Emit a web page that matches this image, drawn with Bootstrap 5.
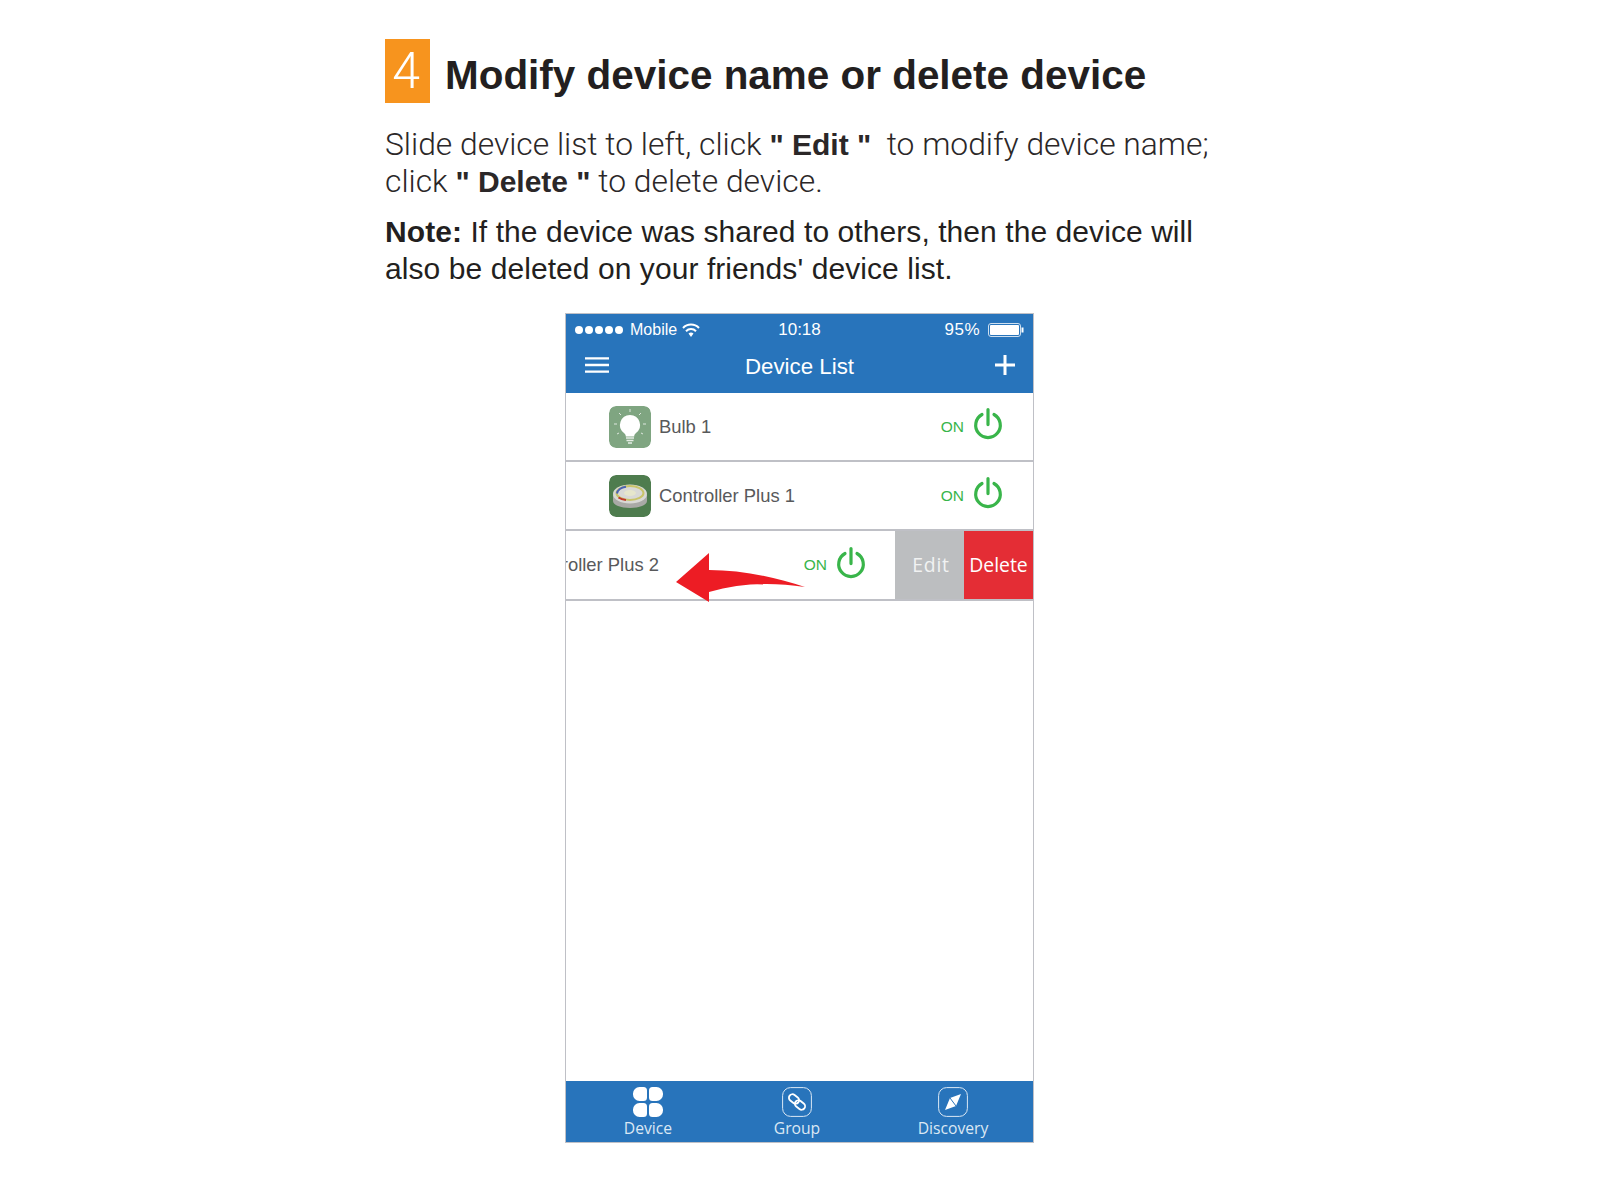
<!DOCTYPE html>
<html lang="en"><head><meta charset="utf-8"><title>Modify device</title>
<link href="https://cdn.jsdelivr.net/npm/bootstrap@5.3.0/dist/css/bootstrap.min.css" rel="stylesheet">
<style>
body{background:#fff;color:#231f20;font-family:"Liberation Sans",Arial,sans-serif;}
.sheet{width:850px;margin-left:385px;padding-top:39px;}
.stepbox{width:45px;height:64px;background:#f7941e;color:#fff;font-family:Roboto,sans-serif;font-size:50px;font-weight:300;line-height:64px;padding-right:3px;text-align:center;flex:none;}
.steptitle{font-size:40.45px;font-weight:700;height:64px;line-height:72px;margin:0 0 0 15px;white-space:nowrap;}
.para{font-size:30px;line-height:37px;margin:23px 0 0;white-space:nowrap;}
.lightp{font-family:Roboto,"Liberation Sans",sans-serif;font-weight:300;font-size:31.8px;color:#2b2728;}
.lightp b{font-family:"Liberation Sans",sans-serif;font-weight:700;font-size:30px;}
.para.notep{margin-top:13px;letter-spacing:.07px;}
.para b{font-weight:700;}
.phone{width:469px;height:830px;margin:26px 0 0 180px;border:1px solid #bfc0c6;display:flex;flex-direction:column;position:relative;overflow:hidden;background:#fff;}
.appbar{background:#2874bb;color:#fff;height:79px;flex:none;}
.statusrow{height:32px;padding:0 9px;font-size:17px;}
.pct{letter-spacing:.5px;}
.dots{display:flex;gap:2px;width:50px;}
.dots i{width:8px;height:8px;border-radius:50%;background:#fff;display:block;}
.mobile{margin-left:5px;font-size:16px;}
.clock{position:absolute;left:0;width:100%;text-align:center;}
.navrow{height:47px;padding:0 18px 9px 19px;position:relative;}
.navtitle{position:absolute;left:0;width:100%;text-align:center;font-size:22.3px;top:0;line-height:41px;}
.devrow{height:69px;border-bottom:2px solid #bfc0c6;flex:none;overflow:hidden;background:#fff;}
.devrow.slidrow{height:70px;}
.devinner{height:67px;padding-left:43px;padding-right:30px;width:467px;flex:none;}
.devinner.slid{margin-left:-136px;width:465px;height:68px;padding-right:29px;}
.appicon{width:42px;height:42px;border-radius:7px;flex:none;display:block;}
.devname{font-size:18.4px;color:#58595b;margin-left:8px;}
.onlbl{font-size:15.5px;color:#39b54a;margin-left:auto;margin-right:9px;}
.pwr{margin-top:-5px;flex:none;}
.swipebtn{width:69px;height:68px;flex:none;color:#fff;font-family:"Open Sans",sans-serif;font-size:19.4px;line-height:68px;text-align:center;}
.swipeedit{background:#bcbec0;color:#f1f2f2;padding-left:3px;letter-spacing:.8px;}
.swipedel{background:#e42d35;}
.filler{flex:1 1 auto;}
.tabbar{background:#2874bb;height:61px;flex:none;color:#dbe8f4;font-family:"Open Sans",sans-serif;font-size:15.7px;}
.tabitem{width:90px;text-align:center;line-height:1;padding-top:6px;}
.tabitem svg{display:block;margin:0 auto 4px;}
.taba{margin-left:37px;}.tabb{margin-left:59px;}.tabc{margin-left:66px;}
.arrow{position:absolute;left:100px;top:236px;}
</style></head><body>
<div class="sheet">
<div class="d-flex align-items-start"><div class="stepbox">4</div><h1 class="steptitle">Modify device name or delete device</h1></div>
<p class="para lightp">Slide device list to left, click <b>" Edit "</b> &nbsp;to modify device name;<br>click <b>" Delete "</b> to delete device.</p>
<p class="para notep"><b>Note:</b> If the device was shared to others, then the device will<br>also be deleted on your friends' device list.</p>
<div class="phone">
 <div class="appbar">
  <div class="statusrow d-flex align-items-center position-relative">
   <span class="dots"><i></i><i></i><i></i><i></i><i></i></span><span class="mobile">Mobile</span>
   <svg class="ms-1" width="20" height="16" viewBox="0 0 20 16"><g fill="none" stroke="#fff" stroke-width="2"><path d="M2 6a11 11 0 0 1 16 0"/><path d="M5 9.2a7 7 0 0 1 10 0"/></g><path d="M7.5 11.600a3.600 3.600 0 0 1 5 0L10 15z" fill="#fff"/></svg>
   <span class="clock">10:18</span>
   <span class="ms-auto pct">95%</span>
   <svg class="ms-2" width="36" height="14" viewBox="0 0 36 14"><rect x=".5" y=".5" width="32" height="13" rx="2.500" fill="none" stroke="#cfe0f0"/><rect x="2" y="2" width="29" height="10" rx="1" fill="#fff"/><rect x="33.500" y="4.500" width="2" height="5" fill="#fff"/></svg>
  </div>
  <div class="navrow d-flex align-items-center justify-content-between">
   <svg width="24" height="16" viewBox="0 0 24 16"><path d="M0 1.400h24M0 8h24M0 14.600h24" stroke="#fff" stroke-width="2.400"/></svg>
   <span class="navtitle">Device List</span>
   <svg width="20" height="20" viewBox="0 0 20 20"><path d="M10 0v20M0 10h20" stroke="#fff" stroke-width="3"/></svg>
  </div>
 </div>
 <div class="devrow"><div class="devinner d-flex align-items-center">
  <svg class="appicon" viewBox="0 0 42 42"><rect width="42" height="42" rx="7" fill="#7fa581"/><path d="M21 9a10 10 0 0 0-6 18c1.500 1.200 1.800 2.500 1.800 3.500h8.400c0-1 .3-2.300 1.800-3.500A10 10 0 0 0 21 9z" fill="#fff"/><path d="M17 32h8M17.500 34.500h7M19 37h4" stroke="#e6ede6" stroke-width="1.600"/><path d="M21 3v3M10 7l2 2M32 7l-2 2M5 18h3M34 18h3M8 28l2-1M34 28l-2-1" stroke="#dfe8df" stroke-width="1"/></svg>
  <span class="devname">Bulb 1</span><span class="onlbl">ON</span>
  <svg class="pwr" width="30" height="32" viewBox="0 0 30 32"><path d="M9 6.500A12.300 12.300 0 1 0 21 6.500M15 1.600v15" fill="none" stroke="#39b54a" stroke-width="3.200" stroke-linecap="round"/></svg>
 </div></div>
 <div class="devrow"><div class="devinner d-flex align-items-center">
  <svg class="appicon" viewBox="0 0 42 42"><rect width="42" height="42" rx="7" fill="#4e7c4e"/><path d="M4 20v6c0 4 7.600 7 17 7s17-3 17-7v-6z" fill="#a9a9a6"/><ellipse cx="21" cy="19" rx="17" ry="9.500" fill="#d9d9d6"/><ellipse cx="21" cy="18" rx="13.500" ry="7" fill="none" stroke="#c9c46a" stroke-width="2"/><path d="M8 18.500c.5-3.500 4-6 9-6.800" fill="none" stroke="#4a62b5" stroke-width="2"/><path d="M9.500 22.500c2 1.500 4.500 2.300 7.500 2.600" fill="none" stroke="#c0392b" stroke-width="2"/><ellipse cx="21" cy="18" rx="6" ry="3" fill="#e6e6cc"/></svg>
  <span class="devname">Controller Plus 1</span><span class="onlbl">ON</span>
  <svg class="pwr" width="30" height="32" viewBox="0 0 30 32"><path d="M9 6.500A12.300 12.300 0 1 0 21 6.500M15 1.600v15" fill="none" stroke="#39b54a" stroke-width="3.200" stroke-linecap="round"/></svg>
 </div></div>
 <div class="devrow slidrow d-flex"><div class="devinner slid d-flex align-items-center">
  <svg class="appicon" viewBox="0 0 42 42"><rect width="42" height="42" rx="7" fill="#4e7c4e"/></svg>
  <span class="devname">Controller Plus 2</span><span class="onlbl">ON</span>
  <svg class="pwr" width="30" height="32" viewBox="0 0 30 32"><path d="M9 6.500A12.300 12.300 0 1 0 21 6.500M15 1.600v15" fill="none" stroke="#39b54a" stroke-width="3.200" stroke-linecap="round"/></svg>
 </div><div class="swipebtn swipeedit">Edit</div><div class="swipebtn swipedel">Delete</div></div>
 <svg class="arrow" width="142" height="56" viewBox="0 0 142 56"><path d="M10 32 43 3v17C75 20 110 27 139 37 105 32 75 33 43 42v10z" fill="#ed1c24"/></svg>
 <div class="filler"></div>
 <div class="tabbar d-flex">
  <div class="tabitem taba"><svg width="30" height="30" viewBox="0 0 30 30"><g fill="#fff"><path d="M6.500 0h4A3.500 3.500 0 0 1 14 3.500v7a3.500 3.500 0 0 1-3.500 3.500h-4A6.500 6.500 0 0 1 0 7.500v-1A6.500 6.500 0 0 1 6.500 0z"/><path d="M23.500 0h-4A3.500 3.500 0 0 0 16 3.500v7a3.500 3.500 0 0 0 3.500 3.500h4A6.500 6.500 0 0 0 30 7.500v-1A6.500 6.500 0 0 0 23.500 0z"/><path d="M6.500 30h4a3.500 3.500 0 0 0 3.500-3.500v-7a3.500 3.500 0 0 0-3.500-3.500h-4A6.500 6.500 0 0 0 0 22.500v1A6.500 6.500 0 0 0 6.500 30z"/><path d="M23.500 30h-4a3.500 3.500 0 0 1-3.500-3.500v-7a3.500 3.500 0 0 1 3.500-3.500h4a6.500 6.500 0 0 1 6.500 6.500v1a6.500 6.500 0 0 1-6.500 6.500z"/></g></svg>Device</div>
  <div class="tabitem tabb"><svg width="30" height="30" viewBox="0 0 30 30"><rect x=".6" y=".6" width="28.800" height="28.800" rx="8" fill="none" stroke="#dbe8f4"/><g fill="none" stroke="#fff" stroke-width="1.800"><rect x="6.500" y="8.500" width="11" height="7" rx="3.500" transform="rotate(38 12 12)"/><rect x="12.500" y="14.500" width="11" height="7" rx="3.500" transform="rotate(38 18 18)"/></g></svg>Group</div>
  <div class="tabitem tabc"><svg width="30" height="30" viewBox="0 0 30 30"><rect x=".6" y=".6" width="28.800" height="28.800" rx="8" fill="none" stroke="#dbe8f4"/><path d="M23 7 12 11 7 23l11-4z" fill="#fff"/><path d="M12 11l6 8" stroke="#2874bb"/></svg>Discovery</div>
 </div>
</div>
</div>
<script src="https://cdn.jsdelivr.net/npm/bootstrap@5.3.0/dist/js/bootstrap.bundle.min.js"></script>
</body></html>
